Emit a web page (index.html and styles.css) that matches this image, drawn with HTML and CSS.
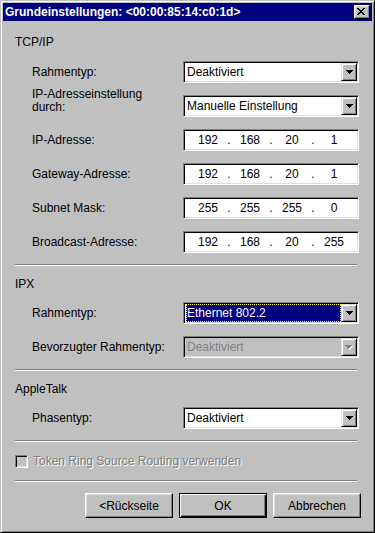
FILE: index.html
```html
<!DOCTYPE html>
<html lang="de">
<head>
<meta charset="utf-8">
<title>Grundeinstellungen</title>
<link rel="stylesheet" href="styles.css">
</head>
<body>
<div class="window">
  <div class="titlebar">
    <span class="title">Grundeinstellungen: &lt;00:00:85:14:c0:1d&gt;</span>
    <span class="close"><svg width="8" height="7" viewBox="0 0 8 7" shape-rendering="crispEdges"><path d="M0 0h2v1h1v1h2v-1h1v-1h2v1h-1v1h-1v1h-1v1h1v1h1v1h1v1h-2v-1h-1v-1h-2v1h-1v1h-2v-1h1v-1h1v-1h1v-1h-1v-1h-1v-1h-1z" fill="#000"/></svg></span>
  </div>
  <div class="content">
    <div class="heading heading--first">TCP/IP</div>
    <div class="rows">
      <div class="label">Rahmentyp:</div>
      <div class="field select">
        <span class="value">Deaktiviert</span>
        <span class="arrow"><svg width="7" height="4" viewBox="0 0 7 4" shape-rendering="crispEdges"><path d="M0 0h7v1h-1v1h-1v1h-1v1h-1v-1h-1v-1h-1v-1h-1z" fill="#000"/></svg></span>
      </div>
      <div class="label label--multi">IP-Adresseinstellung<br>durch:</div>
      <div class="field select">
        <span class="value">Manuelle Einstellung</span>
        <span class="arrow"><svg width="7" height="4" viewBox="0 0 7 4" shape-rendering="crispEdges"><path d="M0 0h7v1h-1v1h-1v1h-1v1h-1v-1h-1v-1h-1v-1h-1z" fill="#000"/></svg></span>
      </div>
      <div class="label">IP-Adresse:</div>
      <div class="field ip"><span class="seg">192</span><span class="dot">.</span><span class="seg">168</span><span class="dot">.</span><span class="seg">20</span><span class="dot">.</span><span class="seg">1</span></div>
      <div class="label">Gateway-Adresse:</div>
      <div class="field ip"><span class="seg">192</span><span class="dot">.</span><span class="seg">168</span><span class="dot">.</span><span class="seg">20</span><span class="dot">.</span><span class="seg">1</span></div>
      <div class="label">Subnet Mask:</div>
      <div class="field ip"><span class="seg">255</span><span class="dot">.</span><span class="seg">255</span><span class="dot">.</span><span class="seg">255</span><span class="dot">.</span><span class="seg">0</span></div>
      <div class="label">Broadcast-Adresse:</div>
      <div class="field ip"><span class="seg">192</span><span class="dot">.</span><span class="seg">168</span><span class="dot">.</span><span class="seg">20</span><span class="dot">.</span><span class="seg">255</span></div>
    </div>
    <div class="sep"></div>
    <div class="heading">IPX</div>
    <div class="rows">
      <div class="label">Rahmentyp:</div>
      <div class="field select">
        <span class="value value--focus">Ethernet 802.2</span>
        <span class="arrow"><svg width="7" height="4" viewBox="0 0 7 4" shape-rendering="crispEdges"><path d="M0 0h7v1h-1v1h-1v1h-1v1h-1v-1h-1v-1h-1v-1h-1z" fill="#000"/></svg></span>
      </div>
      <div class="label">Bevorzugter Rahmentyp:</div>
      <div class="field select select--disabled">
        <span class="value">Deaktiviert</span>
        <span class="arrow"><svg width="8" height="5" viewBox="0 0 8 5" shape-rendering="crispEdges"><path d="M1 1h7v1h-1v1h-1v1h-1v1h-1v-1h-1v-1h-1v-1h-1z" fill="#fff"/><path d="M0 0h7v1h-1v1h-1v1h-1v1h-1v-1h-1v-1h-1v-1h-1z" fill="#808080"/></svg></span>
      </div>
    </div>
    <div class="sep"></div>
    <div class="heading">AppleTalk</div>
    <div class="rows">
      <div class="label">Phasentyp:</div>
      <div class="field select">
        <span class="value">Deaktiviert</span>
        <span class="arrow"><svg width="7" height="4" viewBox="0 0 7 4" shape-rendering="crispEdges"><path d="M0 0h7v1h-1v1h-1v1h-1v1h-1v-1h-1v-1h-1v-1h-1z" fill="#000"/></svg></span>
      </div>
    </div>
    <div class="sep"></div>
    <label class="check"><span class="box"></span><span>Token Ring Source Routing verwenden</span></label>
    <div class="sep"></div>
    <div class="buttons">
      <button class="btn">&lt;Rückseite</button>
      <button class="btn btn--default">OK</button>
      <button class="btn">Abbrechen</button>
    </div>
  </div>
</div>
</body>
</html>
```
FILE: styles.css
```css
* { box-sizing: border-box; }

body {
  margin: 0;
  background: #c0c0c0;
  font: 12px "Liberation Sans", Arial, sans-serif;
  color: #000;
}

.window {
  width: 375px;
  height: 533px;
  border: 1px solid;
  border-color: #c0c0c0 #000 #000 #c0c0c0;
  padding: 2px;
  box-shadow: inset 1px 1px #fff, inset -1px -1px #808080;
  background: #c0c0c0;
  display: flex;
  flex-direction: column;
}

.titlebar {
  height: 18px;
  background: #000080;
  color: #fff;
  display: flex;
  align-items: center;
  justify-content: space-between;
  padding: 0 2px;
}

.title {
  font-weight: bold;
  line-height: 18px;
  white-space: nowrap;
}

.close {
  width: 16px;
  height: 14px;
  border: 1px solid;
  border-color: #fff #000 #000 #fff;
  box-shadow: inset -1px -1px #808080, inset 1px 1px #dfdfdf;
  background: #c0c0c0;
  display: flex;
  align-items: flex-start;
  justify-content: center;
  padding: 2px 2px 0 0;
}

.close svg { display: block; }

.content {
  flex: 1;
  padding: 0 13px 0 12px;
}

.heading {
  line-height: 16px;
  margin: 10px 0 10px;
}

.heading--first {
  margin-top: 13px;
  margin-bottom: 11px;
}

.rows {
  display: grid;
  grid-template-columns: 168px 176px;
  row-gap: 12px;
  align-items: center;
}

.label {
  padding-left: 17px;
  line-height: 16px;
  white-space: nowrap;
}

.label--multi {
  line-height: 13px;
  align-self: start;
  margin-top: -7px;
}

.field {
  height: 22px;
  border: 1px solid;
  border-color: #808080 #fff #fff #808080;
  padding: 1px;
  box-shadow: inset 1px 1px #000, inset -1px -1px #dfdfdf;
  background: #fff;
}

.select {
  display: flex;
}

.select .value {
  flex: 1;
  line-height: 18px;
  padding-left: 2px;
  white-space: nowrap;
  overflow: hidden;
}

.select .value--focus {
  margin-left: 1px;
  padding-left: 1px;
  background: #000080;
  color: #fff;
  outline: 1px dotted #ffff00;
  outline-offset: -1px;
}

.select--disabled {
  background: #c0c0c0;
}

.select--disabled .value {
  color: #808080;
}

.arrow {
  width: 16px;
  height: 18px;
  border: 1px solid;
  border-color: #dfdfdf #000 #000 #dfdfdf;
  box-shadow: inset 1px 1px #fff, inset -1px -1px #808080;
  background: #c0c0c0;
  display: flex;
  align-items: center;
  justify-content: center;
}

.arrow svg { display: block; }

.ip {
  display: flex;
  padding-left: 7px;
  line-height: 18px;
}

.ip .seg {
  width: 34px;
  text-align: center;
}

.ip .dot {
  width: 8px;
  text-align: center;
}

.sep {
  height: 2px;
  border-top: 1px solid #808080;
  border-bottom: 1px solid #fff;
  margin: 11px 2px 0 0;
}

.check {
  display: flex;
  align-items: center;
  gap: 5px;
  line-height: 16px;
  margin-top: 11px;
  color: #808080;
  text-shadow: 1px 1px #fff;
}

.box {
  width: 13px;
  height: 13px;
  border: 1px solid;
  border-color: #808080 #fff #fff #808080;
  box-shadow: inset 1px 1px #000, inset -1px -1px #dfdfdf;
  background: #c0c0c0;
}

.buttons {
  display: flex;
  justify-content: flex-end;
  gap: 6px;
  margin: 11px -2px 0 0;
}

.btn {
  width: 88px;
  height: 25px;
  font: inherit;
  color: #000;
  background: #c0c0c0;
  border: 1px solid;
  border-color: #fff #000 #000 #fff;
  box-shadow: inset -1px -1px #808080, inset 1px 1px #dfdfdf;
  padding: 0;
}

.btn--default {
  border-color: #000;
  box-shadow: inset 1px 1px #fff, inset -1px -1px #000, inset -2px -2px #808080;
}
```
